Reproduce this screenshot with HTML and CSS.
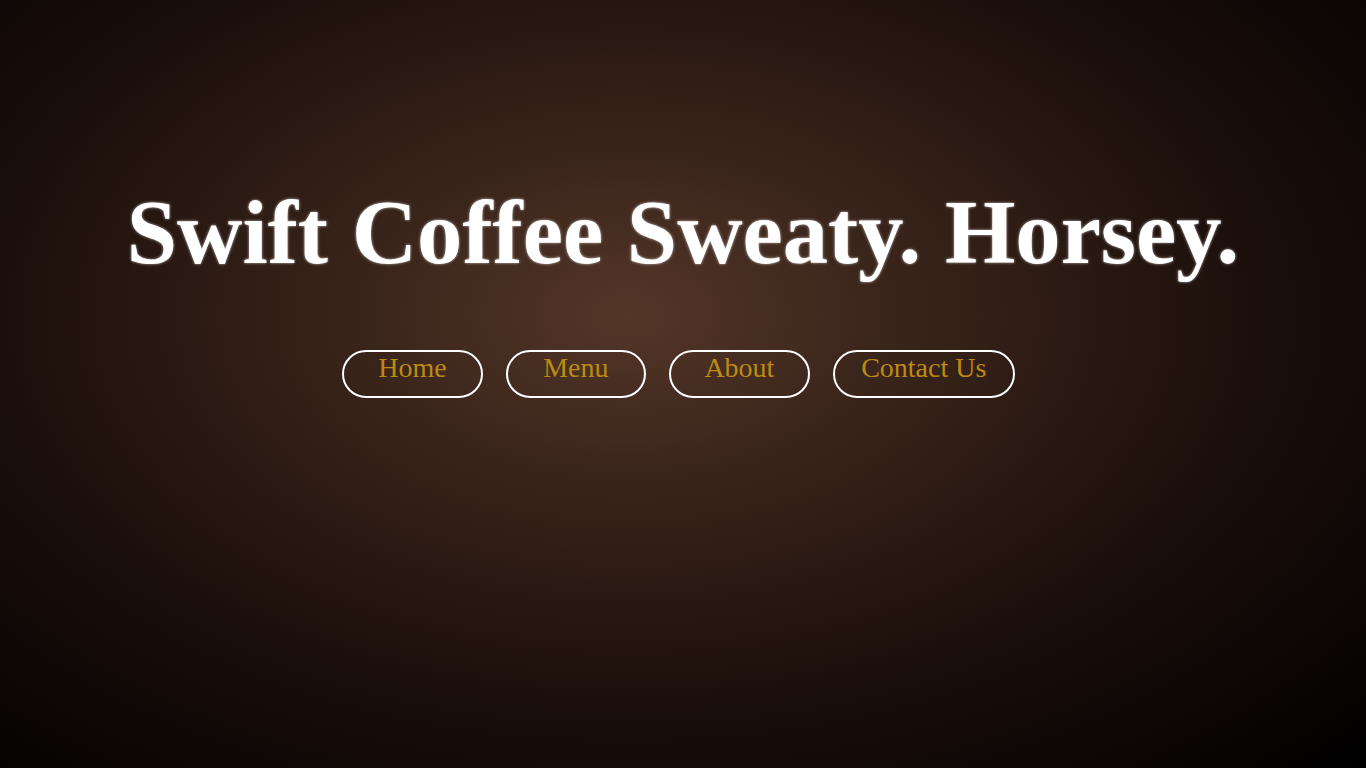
FILE: index.html
```html
<!DOCTYPE html>
<html lang="en">
<head>
<meta charset="utf-8">
<title>Swift Coffee</title>
<link rel="stylesheet" href="styles.css">
</head>
<body>
<main class="hero">
  <h1 class="title">Swift Coffee Sweaty. Horsey.</h1>
  <nav class="nav">
    <a class="nav-btn" href="#">Home</a>
    <a class="nav-btn" href="#">Menu</a>
    <a class="nav-btn" href="#">About</a>
    <a class="nav-btn" href="#">Contact Us</a>
  </nav>
</main>
</body>
</html>
```
FILE: styles.css
```css
html, body {
  margin: 0;
  height: 100%;
}
body {
  background: radial-gradient(ellipse farthest-corner at 46% 41%, #543628 0%, #3a251b 25%, #1c0f0b 60%, #000000 100%);
  font-family: "Liberation Serif", "Times New Roman", serif;
  overflow: hidden;
}
.hero {
  display: flex;
  flex-direction: column;
  align-items: center;
  padding-top: 181px;
}
.title {
  margin: 0;
  color: #ffffff;
  font-size: 90.6px;
  font-weight: bold;
  line-height: 104px;
  word-spacing: 1px;
  text-shadow: 0 0 3px rgba(255,255,255,0.7);
}
.nav {
  display: flex;
  gap: 23px;
  margin-top: 65px;
  padding-right: 9px;
}
.nav-btn {
  box-sizing: border-box;
  min-width: 140.5px;
  height: 48px;
  padding: 0 26.5px;
  border: 2px solid #ffffff;
  border-radius: 24px;
  color: #bd8a12;
  font-size: 28px;
  line-height: 32px;
  text-align: center;
  text-decoration: none;
}
```
